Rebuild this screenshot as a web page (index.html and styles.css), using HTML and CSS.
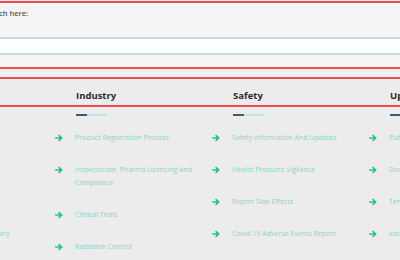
FILE: index.html
```html
<!DOCTYPE html>
<html lang="en">
<head>
    <meta charset="UTF-8">
    <meta name="viewport" content="width=device-width, initial-scale=1.0">
    <title>Mega Menu</title>
    <link rel="stylesheet" href="styles.css">
</head>
<body>
    <form class="search-box">
        <label class="search-label" for="q">Search here:</label>
        <input class="search-input" id="q" type="text">
    </form>

    <div class="spacer"></div>

    <nav class="mega-menu">
        <div class="menu-heads">
            <h3 class="menu-title">About</h3>
            <h3 class="menu-title">Industry</h3>
            <h3 class="menu-title">Safety</h3>
            <h3 class="menu-title">Updates</h3>
            <h3 class="menu-title">Contact</h3>
        </div>

        <div class="menu-cols">
            <div class="menu-col">
                <span class="title-bar"></span>
                <ul class="menu-list">
                    <li><svg class="arrow" viewBox="0 0 8 8"><path d="M4.2 0.6 L7.8 4 L4.2 7.4 L3.1 6.3 L4.6 4.8 H0.2 V3.2 H4.6 L3.1 1.7 Z"/></svg><a href="#">About Us</a></li>
                    <li><svg class="arrow" viewBox="0 0 8 8"><path d="M4.2 0.6 L7.8 4 L4.2 7.4 L3.1 6.3 L4.6 4.8 H0.2 V3.2 H4.6 L3.1 1.7 Z"/></svg><a href="#">Our Mandate</a></li>
                    <li><svg class="arrow" viewBox="0 0 8 8"><path d="M4.2 0.6 L7.8 4 L4.2 7.4 L3.1 6.3 L4.6 4.8 H0.2 V3.2 H4.6 L3.1 1.7 Z"/></svg><a href="#">Contact Us</a></li>
                    <li><svg class="arrow" viewBox="0 0 8 8"><path d="M4.2 0.6 L7.8 4 L4.2 7.4 L3.1 6.3 L4.6 4.8 H0.2 V3.2 H4.6 L3.1 1.7 Z"/></svg><a href="#">Medicines Products Registry</a></li>
                </ul>
            </div>

            <div class="menu-col">
                <span class="title-bar"></span>
                <ul class="menu-list">
                    <li><svg class="arrow" viewBox="0 0 8 8"><path d="M4.2 0.6 L7.8 4 L4.2 7.4 L3.1 6.3 L4.6 4.8 H0.2 V3.2 H4.6 L3.1 1.7 Z"/></svg><a href="#">Product Registration Process</a></li>
                    <li><svg class="arrow" viewBox="0 0 8 8"><path d="M4.2 0.6 L7.8 4 L4.2 7.4 L3.1 6.3 L4.6 4.8 H0.2 V3.2 H4.6 L3.1 1.7 Z"/></svg><a href="#">Inspectorate, Pharma Licencing And Compliance</a></li>
                    <li><svg class="arrow" viewBox="0 0 8 8"><path d="M4.2 0.6 L7.8 4 L4.2 7.4 L3.1 6.3 L4.6 4.8 H0.2 V3.2 H4.6 L3.1 1.7 Z"/></svg><a href="#">Clinical Trials</a></li>
                    <li><svg class="arrow" viewBox="0 0 8 8"><path d="M4.2 0.6 L7.8 4 L4.2 7.4 L3.1 6.3 L4.6 4.8 H0.2 V3.2 H4.6 L3.1 1.7 Z"/></svg><a href="#">Radiation Control</a></li>
                </ul>
            </div>

            <div class="menu-col">
                <span class="title-bar"></span>
                <ul class="menu-list">
                    <li><svg class="arrow" viewBox="0 0 8 8"><path d="M4.2 0.6 L7.8 4 L4.2 7.4 L3.1 6.3 L4.6 4.8 H0.2 V3.2 H4.6 L3.1 1.7 Z"/></svg><a href="#">Safety Information And Updates</a></li>
                    <li><svg class="arrow" viewBox="0 0 8 8"><path d="M4.2 0.6 L7.8 4 L4.2 7.4 L3.1 6.3 L4.6 4.8 H0.2 V3.2 H4.6 L3.1 1.7 Z"/></svg><a href="#">Health Products Vigilance</a></li>
                    <li><svg class="arrow" viewBox="0 0 8 8"><path d="M4.2 0.6 L7.8 4 L4.2 7.4 L3.1 6.3 L4.6 4.8 H0.2 V3.2 H4.6 L3.1 1.7 Z"/></svg><a href="#">Report Side Effects</a></li>
                    <li><svg class="arrow" viewBox="0 0 8 8"><path d="M4.2 0.6 L7.8 4 L4.2 7.4 L3.1 6.3 L4.6 4.8 H0.2 V3.2 H4.6 L3.1 1.7 Z"/></svg><a href="#">Covid-19 Adverse Events Report</a></li>
                </ul>
            </div>

            <div class="menu-col">
                <span class="title-bar"></span>
                <ul class="menu-list">
                    <li><svg class="arrow" viewBox="0 0 8 8"><path d="M4.2 0.6 L7.8 4 L4.2 7.4 L3.1 6.3 L4.6 4.8 H0.2 V3.2 H4.6 L3.1 1.7 Z"/></svg><a href="#">Public Notices</a></li>
                    <li><svg class="arrow" viewBox="0 0 8 8"><path d="M4.2 0.6 L7.8 4 L4.2 7.4 L3.1 6.3 L4.6 4.8 H0.2 V3.2 H4.6 L3.1 1.7 Z"/></svg><a href="#">Downloads</a></li>
                    <li><svg class="arrow" viewBox="0 0 8 8"><path d="M4.2 0.6 L7.8 4 L4.2 7.4 L3.1 6.3 L4.6 4.8 H0.2 V3.2 H4.6 L3.1 1.7 Z"/></svg><a href="#">Tenders</a></li>
                    <li><svg class="arrow" viewBox="0 0 8 8"><path d="M4.2 0.6 L7.8 4 L4.2 7.4 L3.1 6.3 L4.6 4.8 H0.2 V3.2 H4.6 L3.1 1.7 Z"/></svg><a href="#">Vacancies</a></li>
                </ul>
            </div>
        </div>
    </nav>
</body>
</html>
```

FILE: styles.css
```css
html,
body {
    overflow: hidden;
}

body {
    margin: 0;
    background-color: #ececec;
    font-family: 'Open Sans', sans-serif;
    color: #333;
}

.search-box {
    margin: 1px -40px 0;
    padding: 5px 0 12px;
    background-color: #f5f5f5;
    border-top: 2px solid #ee4b55;
    border-bottom: 2px solid #ee4b55;
}

.search-label {
    display: block;
    padding-left: 23px;
    font-size: 7.5px;
    line-height: 10px;
    font-weight: 600;
    color: #555;
}

.search-input {
    display: block;
    box-sizing: border-box;
    width: 100%;
    height: 18px;
    margin-top: 19px;
    border: none;
    border-top: 2px solid #c3dce6;
    border-bottom: 2px solid #c3dce6;
    background-color: #fff;
    outline: none;
}

.spacer {
    height: 8px;
    background-color: #efefef;
}

.mega-menu {
    margin-left: -102px;
}

.menu-heads,
.menu-cols {
    display: grid;
    grid-template-columns: repeat(5, 157px);
}

.menu-heads {
    border-top: 2px solid #ee4b55;
    border-bottom: 2px solid #ee4b55;
}

.menu-title {
    margin: 0;
    padding: 10px 0 2px 21px;
    font-size: 9.5px;
    line-height: 14px;
    font-weight: 700;
    color: #2b2b2b;
}

.menu-col {
    padding-top: 7px;
}

.title-bar {
    display: block;
    width: 31px;
    height: 2px;
    margin-left: 21px;
    background: linear-gradient(to right, #3f5878 11px, #bde6db 11px);
}

.menu-list {
    list-style: none;
    margin: 15px 0 0;
    padding: 0;
    display: flex;
    flex-direction: column;
    gap: 19px;
}

.menu-list li {
    display: flex;
    align-items: flex-start;
}

.arrow {
    flex: none;
    width: 8px;
    height: 8px;
    margin-top: 2.5px;
    fill: #1fbf98;
}

.menu-list a {
    margin-left: 12px;
    max-width: 122px;
    font-size: 7px;
    line-height: 13px;
    color: #8bd4c1;
    text-decoration: none;
}
```
